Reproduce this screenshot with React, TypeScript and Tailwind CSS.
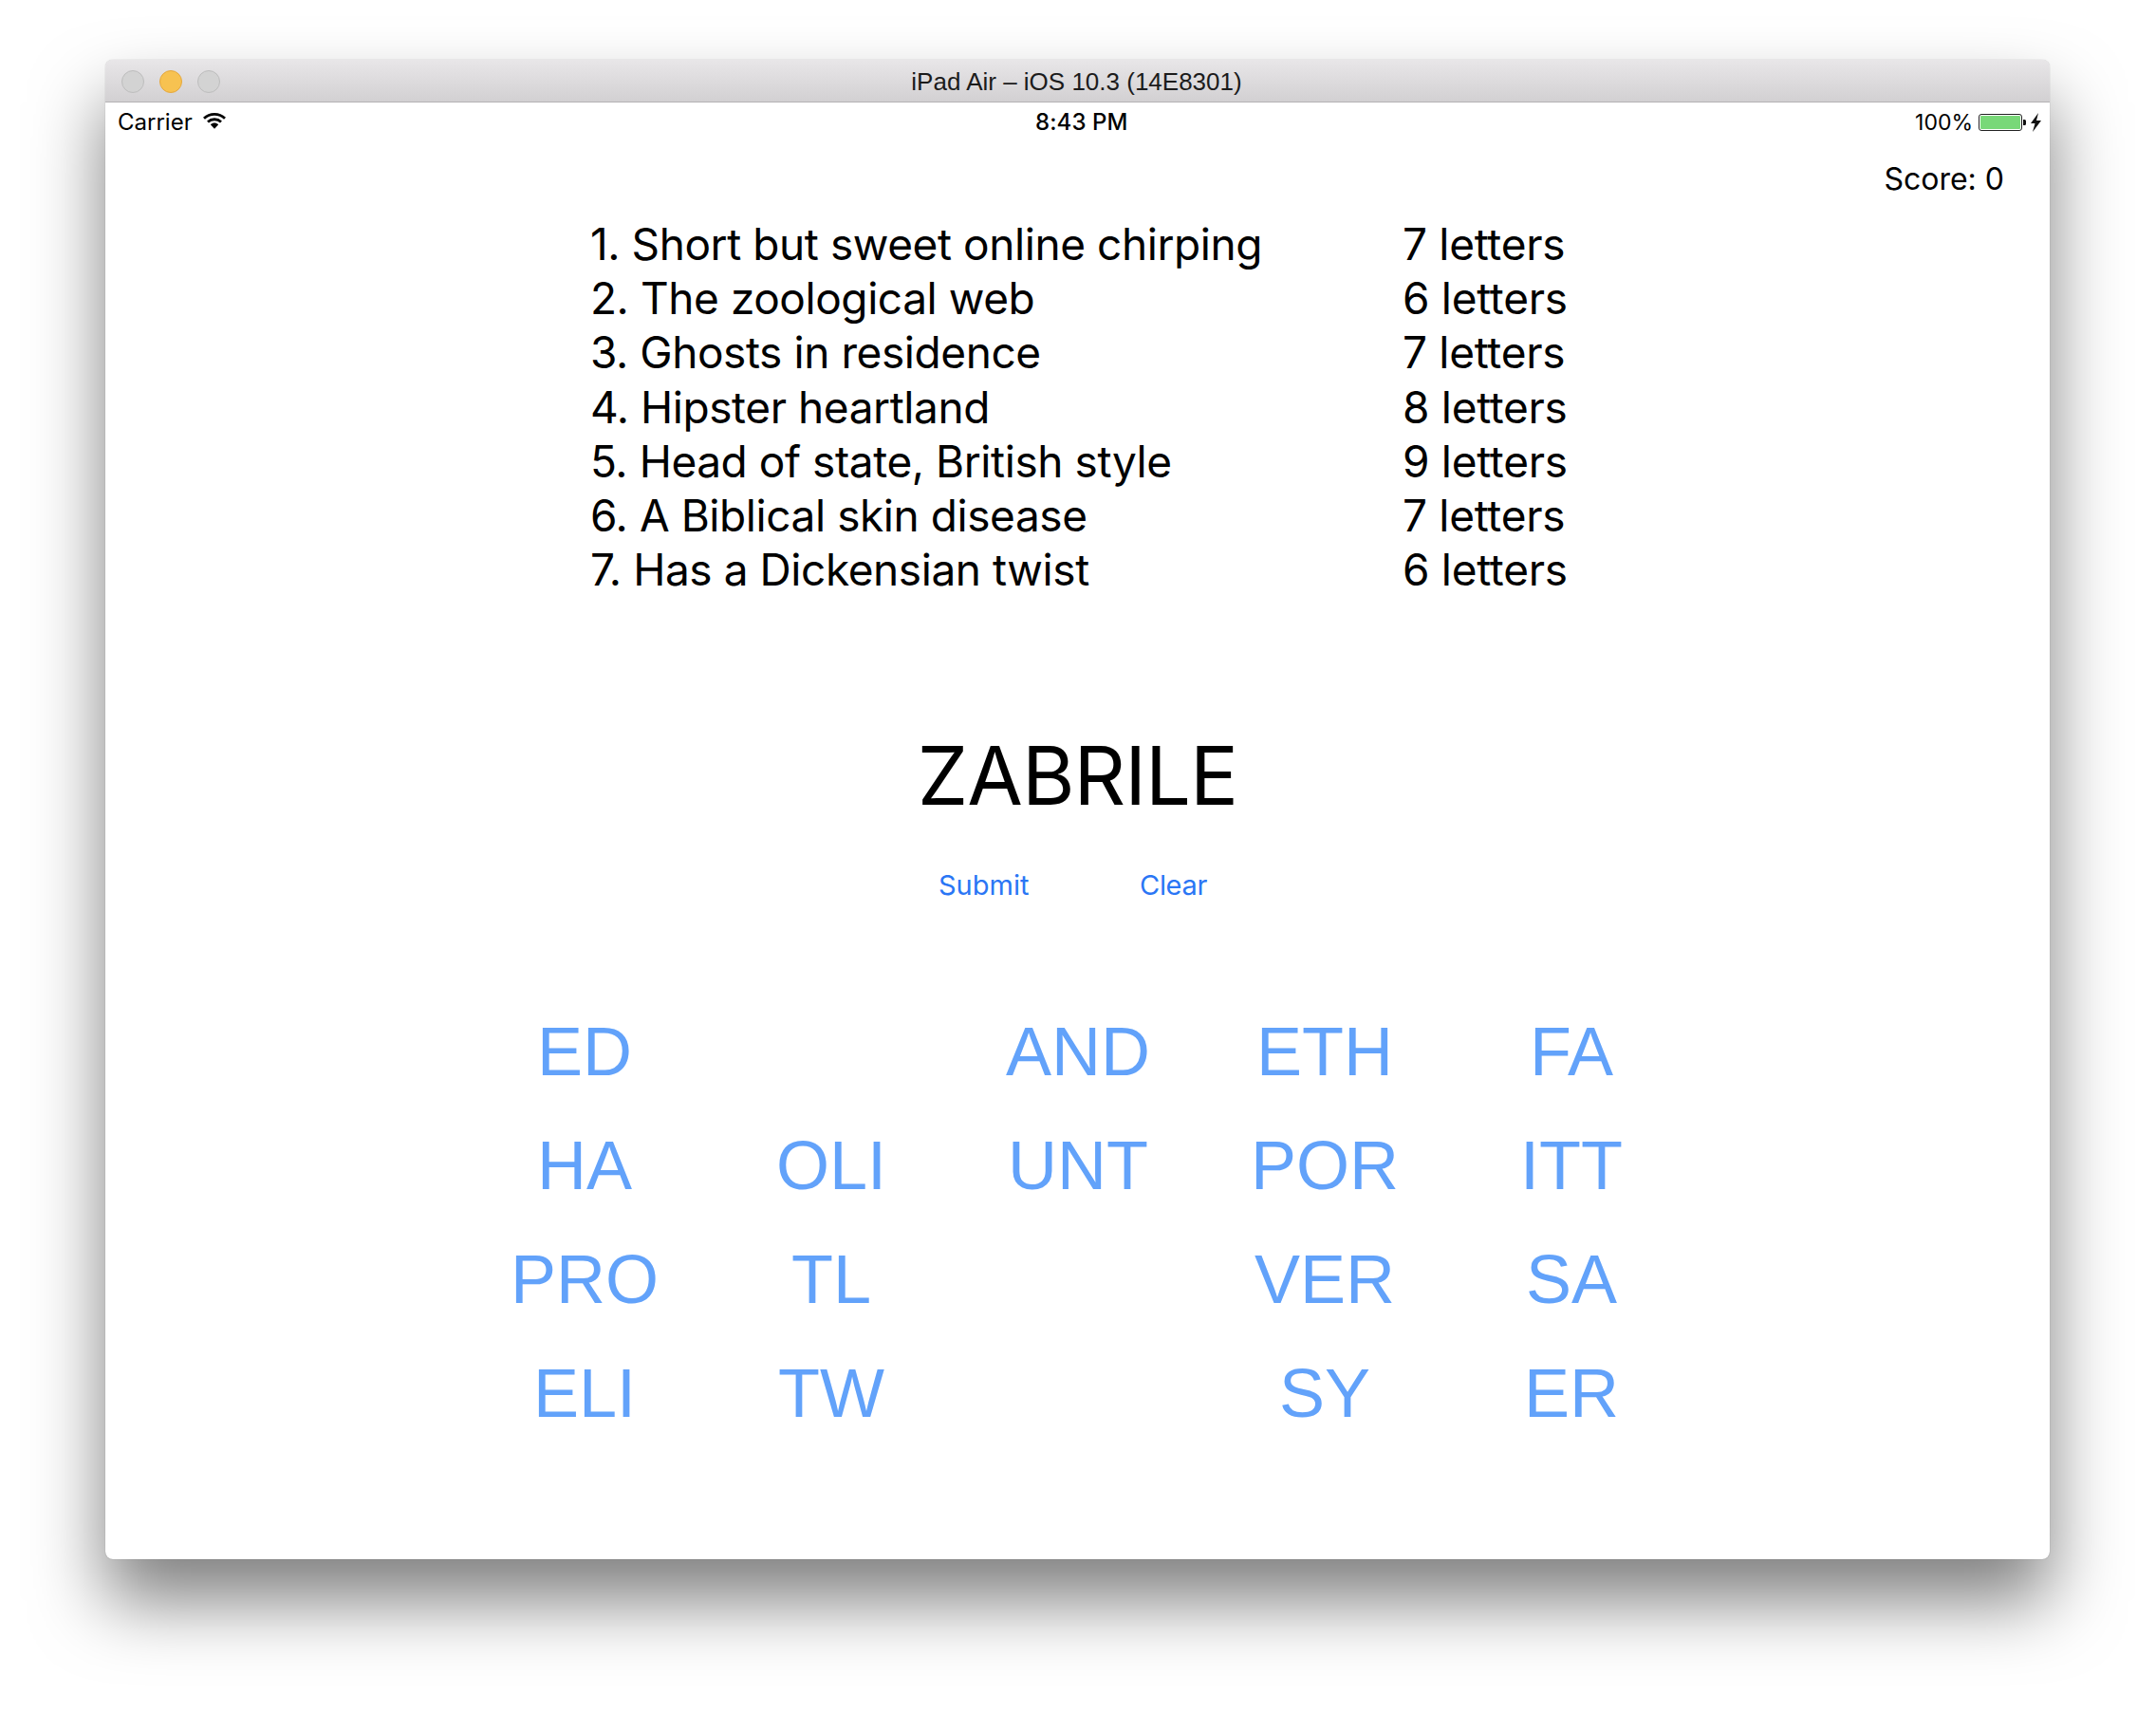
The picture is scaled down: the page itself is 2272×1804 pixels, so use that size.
const clues = [
  ["1. Short but sweet online chirping", "7 letters"],
  ["2. The zoological web", "6 letters"],
  ["3. Ghosts in residence", "7 letters"],
  ["4. Hipster heartland", "8 letters"],
  ["5. Head of state, British style", "9 letters"],
  ["6. A Biblical skin disease", "7 letters"],
  ["7. Has a Dickensian twist", "6 letters"],
];
const tiles = ["ED", "", "AND", "ETH", "FA", "HA", "OLI", "UNT", "POR", "ITT", "PRO", "TL", "", "VER", "SA", "ELI", "TW", "", "SY", "ER"];

function Wifi() {
  return (
    <svg width="24" height="17" viewBox="0 0 24 17" className="ml-[11px] -mt-[3px]">
      <path d="M1 5.8C7 0 17 0 23 5.8" fill="none" stroke="#000" strokeWidth="2.8" />
      <path d="M5 9.5C9 5.8 15 5.8 19 9.5" fill="none" stroke="#000" strokeWidth="2.8" />
      <path d="M7.8 12.2C10.5 10 13.5 10 16.2 12.2L12 16.8Z" fill="#000" />
    </svg>
  );
}

function Battery() {
  return (
    <svg width="67" height="20" viewBox="0 0 67 20" className="ml-[6px]">
      <rect x="0.5" y="1.5" width="45" height="17" rx="2.5" fill="#fff" stroke="#222" strokeWidth="1" />
      <rect x="2" y="3" width="42" height="14" rx="1" fill="#78d878" />
      <path d="M47 7h1.5a1.5 1.5 0 0 1 1.5 1.5v3a1.5 1.5 0 0 1-1.5 1.5H47Z" fill="#111" />
      <path d="M63 0L55 11h4.5L57 20l9-12h-5Z" fill="#111" />
    </svg>
  );
}

export default function App() {
  return (
    <div className="h-[1804px] w-[2272px] overflow-hidden bg-white pl-[111px] pt-[63px] font-['Inter',sans-serif] text-black">
      <div className="flex h-[1580px] w-[2049px] flex-col overflow-hidden rounded-[8px] bg-white shadow-[0_44px_76px_rgba(0,0,0,0.5),0_0_1px_rgba(0,0,0,0.4)]">
        <div className="relative flex h-[45px] items-center justify-center border-b border-[#b4b2b4] bg-gradient-to-b from-[#e8e6e8] to-[#d2d0d2] pr-[2px] pt-[2px]">
          <div className="absolute left-[17px] top-[11px] flex gap-[16px]">
            <span className="h-[24px] w-[24px] rounded-full border border-[#bdbdbd] bg-[#d3d3d3]" />
            <span className="h-[24px] w-[24px] rounded-full border border-[#e5a83e] bg-[#f7c251]" />
            <span className="h-[24px] w-[24px] rounded-full border border-[#bdbdbd] bg-[#d3d3d3]" />
          </div>
          <span className="font-['Liberation_Sans',sans-serif] text-[26px] leading-none text-[#1b1b1b]">iPad Air – iOS 10.3 (14E8301)</span>
        </div>

        <div className="relative flex h-[40px] items-center justify-between pl-[13px] pr-[8px] pt-[2px] text-[24px]">
          <div className="flex items-center">
            <span>Carrier</span>
            <Wifi />
          </div>
          <span className="absolute left-[980px] font-medium tracking-[0.1px]">8:43 PM</span>
          <div className="flex items-center">
            <span className="text-[23px]">100%</span>
            <Battery />
          </div>
        </div>

        <div className="flex justify-end pr-[48px] pt-[19px] text-[32px] leading-[44px]">Score: 0</div>

        <div className="mt-[18px] pl-[511px] text-[46px] leading-[57.2px]">
          {clues.map(([clue, count]) => (
            <div key={clue} className="flex">
              <span className="w-[856px] whitespace-nowrap tracking-[-0.43px]">{clue}</span>
              <span className="whitespace-nowrap tracking-[-0.3px]">{count}</span>
            </div>
          ))}
        </div>

        <div className="mt-[139px] w-full text-center text-[85px] leading-[100px] tracking-[-1px]">ZABRILE</div>

        <div className="mt-[47px] flex pl-[878px] text-[29px] leading-[36px] text-[#2a76f5]">
          <span className="w-[212px]">Submit</span>
          <span className="tracking-[-0.3px]">Clear</span>
        </div>

        <div className="mt-[97px] grid w-[1300px] ml-[375px] grid-cols-[repeat(5,260px)] auto-rows-[120px] place-items-center font-['Liberation_Sans',sans-serif] text-[72px] text-[#62a2fa]">
          {tiles.map((t, i) => (
            <span key={i}>{t}</span>
          ))}
        </div>
      </div>
    </div>
  );
}
